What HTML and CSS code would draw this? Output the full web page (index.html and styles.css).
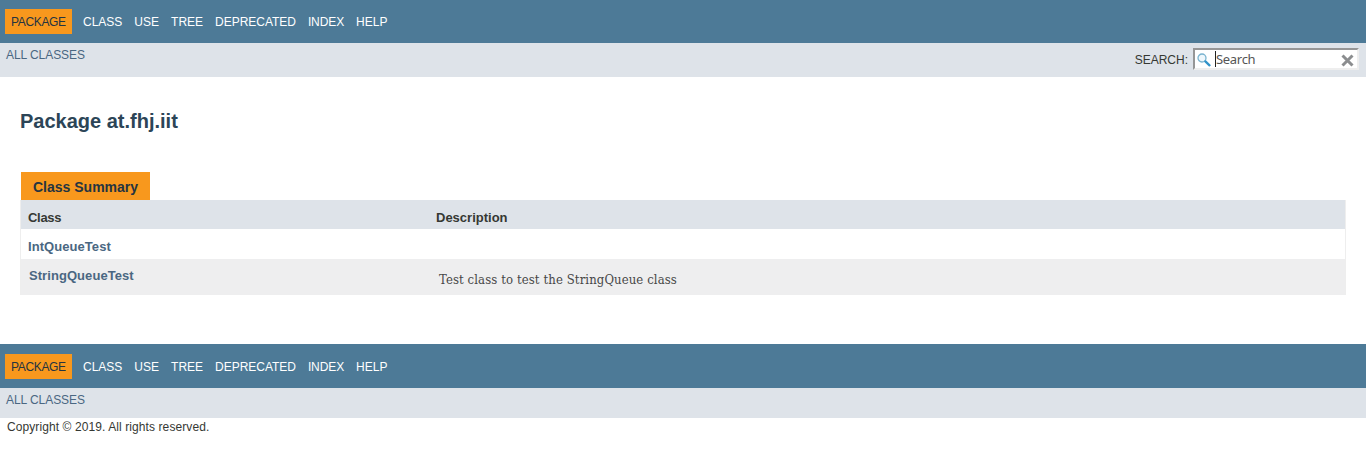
FILE: index.html
```html
<!DOCTYPE html>
<html lang="en">
<head>
<meta charset="utf-8">
<title>at.fhj.iit</title>
<link rel="stylesheet" href="styles.css">
</head>
<body>
<header>
  <nav class="top-nav">
    <span class="current">PACKAGE</span><a>CLASS</a><a>USE</a><a>TREE</a><a class="wide">DEPRECATED</a><a class="index">INDEX</a><a>HELP</a>
  </nav>
  <div class="sub-nav">
    <a>ALL CLASSES</a>
    <div class="search">
      <label>SEARCH:</label>
      <div class="search-box">
        <svg class="glass" width="14" height="14" viewBox="0 0 14 14"><circle cx="5" cy="5" r="4" fill="#eef7fc" stroke="#79b3cf" stroke-width="1.3"/><path d="M8.4 8.4L12.5 12.3" stroke="#3293c9" stroke-width="2.3" stroke-linecap="round"/></svg>
        <span class="query">Search</span>
        <svg class="clear" width="13" height="13" viewBox="0 0 13 13"><path d="M1.5 1.5L11.5 11.5M11.5 1.5L1.5 11.5" stroke="#8b8d8f" stroke-width="3"/></svg>
      </div>
    </div>
  </div>
</header>
<main>
  <h1>Package at.fhj.iit</h1>
  <div class="caption">Class Summary</div>
  <div class="summary">
    <div class="row head"><span class="class-heading">Class</span><span>Description</span></div>
    <div class="row"><a>IntQueueTest</a><span></span></div>
    <div class="row alt"><a>StringQueueTest</a><span class="block">Test class to test the StringQueue class</span></div>
  </div>
</main>
<footer>
  <nav class="top-nav">
    <span class="current">PACKAGE</span><a>CLASS</a><a>USE</a><a>TREE</a><a class="wide">DEPRECATED</a><a class="index">INDEX</a><a>HELP</a>
  </nav>
  <div class="sub-nav"><a>ALL CLASSES</a></div>
  <p class="legal">Copyright © 2019. All rights reserved.</p>
</footer>
</body>
</html>
```
FILE: styles.css
```css
* { box-sizing: border-box; }
body {
  margin: 0;
  background: #fff;
  color: #353833;
  font: 12px/14px "Liberation Sans", Arial, sans-serif;
}
.top-nav {
  display: flex;
  align-items: flex-start;
  gap: 12px;
  height: 43px;
  padding: 9px 5px 0;
  background: #4d7a97;
  color: #fff;
}
.top-nav a { padding-top: 6px; }
.top-nav .wide { letter-spacing: -0.03px; }
.top-nav .index { letter-spacing: -0.1px; }
.top-nav .current {
  width: 67px;
  height: 25px;
  margin-right: -1px;
  padding: 6px 0 0 6px;
  background: #f8981d;
  color: #253441;
  letter-spacing: -0.35px;
}
.sub-nav {
  display: flex;
  justify-content: space-between;
  height: 34px;
  padding: 5px 7px 0 6px;
  background: #dee3e9;
}
.sub-nav a { color: #4a6782; letter-spacing: -0.06px; }
.search { display: flex; gap: 5px; }
.search label { padding-top: 5px; }
.search-box {
  display: flex;
  width: 166px;
  height: 22px;
  padding: 0 3px 0 2px;
  border: 2px solid;
  border-color: #969696 #eee #eee #969696;
  background: #fff;
}
.glass { margin-top: 3px; }
.query {
  height: 16px;
  margin: 1px auto 0 4px;
  border-left: 1px solid #222;
  color: #555;
  font: 13px/17px "Noto Sans", "Open Sans", sans-serif;
  letter-spacing: -0.3px;
}
.clear { margin-top: 4px; }
main { height: 267px; padding: 32px 20px 0; }
h1 {
  height: 63px;
  margin: 0;
  color: #2c4557;
  font-size: 20px;
  line-height: 24px;
}
.caption {
  width: 129px;
  height: 28px;
  margin-left: 1px;
  padding: 7px 0 0 12px;
  background: #f8981d;
  color: #253441;
  font-size: 14px;
  font-weight: bold;
  line-height: 16px;
}
.summary {
  border: solid #eee;
  border-width: 0 1px;
  font-size: 13px;
  font-weight: bold;
  line-height: 15px;
}
.row {
  display: grid;
  grid-template-columns: 408px 1fr;
  height: 30px;
  padding: 10px 7px 0;
}
.row a { color: #4a6782; letter-spacing: 0.06px; }
.class-heading { letter-spacing: -0.3px; }
.head { height: 29px; background: #dee3e9; }
.alt { height: 36px; padding: 9px 8px 0; background: #eeeeef; }
.block {
  padding: 4px 0 0 2px;
  color: #474747;
  font: 13px/15px "DejaVu Serif Condensed", "DejaVu Serif", serif;
  letter-spacing: 0.1px;
}
footer .top-nav { height: 44px; padding-top: 10px; }
footer .sub-nav { height: 30px; }
.legal { margin: 0; padding: 2px 7px; letter-spacing: 0.09px; }
```
